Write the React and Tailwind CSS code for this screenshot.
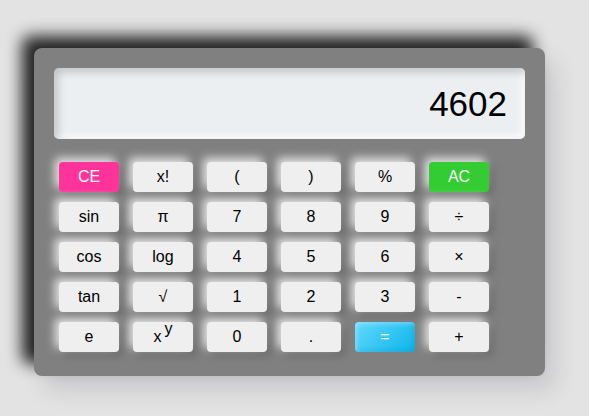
import React from "react";

const rows = [
  ["CE", "x!", "(", ")", "%", "AC"],
  ["sin", "π", "7", "8", "9", "÷"],
  ["cos", "log", "4", "5", "6", "×"],
  ["tan", "√", "1", "2", "3", "-"],
  ["e", "xy", "0", ".", "=", "+"],
];

function Key({ k }) {
  let cls =
    "h-[30px] w-[60px] rounded-[4px] flex items-center justify-center text-[16px] ";
  if (k === "CE") cls += "bg-[#ff3399] text-white shadow-[-4px_-4px_10px_rgba(255,255,255,0.8),4px_4px_9px_rgba(0,0,0,0.18)]";
  else if (k === "AC") cls += "bg-[#33cc33] text-white shadow-[-4px_-4px_10px_rgba(255,255,255,0.8),4px_4px_9px_rgba(0,0,0,0.18)]";
  else if (k === "=")
    cls +=
      "bg-[linear-gradient(135deg,#62d9ff,#0cb5ea)] text-white shadow-[inset_2px_2px_4px_rgba(255,255,255,0.3),inset_-2px_-2px_4px_rgba(0,80,120,0.15)]";
  else cls += "bg-[#efefef] text-black shadow-[-4px_-4px_10px_rgba(255,255,255,0.8),4px_4px_9px_rgba(0,0,0,0.18)]";
  return (
    <div className={cls}>
      {k === "xy" ? (
        <span className="relative pr-[8px] -ml-[3px]">
          x<span className="absolute left-[11px] top-[-8px]">y</span>
        </span>
      ) : (
        k
      )}
    </div>
  );
}

export default function App() {
  return (
    <div
      className="w-[589px] h-[416px] bg-[#e3e3e3] pl-[34px] pt-[48px] overflow-hidden"
      style={{ fontFamily: '"Liberation Sans", Arial, sans-serif' }}
    >
      <div className="w-[511px] h-[328px] bg-[#808080] rounded-[8px] pt-[20px] px-[20px] shadow-[-12px_-12px_16px_rgba(0,0,0,0.85),10px_14px_24px_rgba(0,10,30,0.12)]">
        <div className="h-[71px] rounded-[5px] bg-[#eceff1] flex items-center justify-end pr-[18px] shadow-[inset_4px_4px_8px_rgba(0,0,0,0.18),inset_-3px_-3px_6px_rgba(255,255,255,0.9)]">
          <span className="text-[35px] text-black leading-none">4602</span>
        </div>
        <div className="mt-[23px] ml-[5px] grid grid-cols-[repeat(6,60px)] gap-x-[14px] gap-y-[10px]">
          {rows.flat().map((k, i) => (
            <Key key={i} k={k} />
          ))}
        </div>
      </div>
    </div>
  );
}
